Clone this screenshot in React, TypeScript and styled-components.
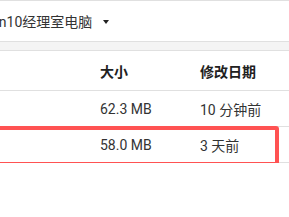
import styled, { createGlobalStyle } from "styled-components";

const GlobalStyle = createGlobalStyle`
  body {
    margin: 0;
    background: #fff;
    font-family: Roboto, "Noto Sans CJK SC", sans-serif;
    color: #212121;
    overflow: hidden;
  }
`;

const Page = styled.div`
  width: 289px;
  border-top: 1px solid #e0e0e0;
`;

const Toolbar = styled.div`
  height: 40px;
  display: flex;
  align-items: center;
  gap: 11px;
  font-size: 14px;
  color: #333;
  white-space: nowrap;
`;

const Crumb = styled.span`
  margin-left: -17px;
`;

const Caret = styled.span`
  width: 0;
  height: 0;
  border-left: 3.5px solid transparent;
  border-right: 3.5px solid transparent;
  border-top: 4px solid #222;
  margin-top: 1px;
`;

const Band = styled.div`
  height: 8px;
  background: #f4f4f4;
  border-top: 1px solid #e0e0e0;
  border-bottom: 1px solid #e0e0e0;
`;

const Row = styled.div<{ $head?: boolean }>`
  position: relative;
  display: grid;
  grid-template-columns: 100px 100px 1fr;
  align-items: center;
  height: ${(p) => (p.$head ? "39px" : "35px")};
  border-bottom: 1px solid #e0e0e0;
  font-size: 14px;
  font-weight: ${(p) => (p.$head ? 700 : 400)};
  color: ${(p) => (p.$head ? "#212121" : "#333")};
  white-space: nowrap;
`;

const Highlight = styled.div`
  position: absolute;
  top: -1px;
  left: -10px;
  right: 10px;
  height: 32px;
  border: 4px solid #ff5252;
  border-radius: 3px;
  pointer-events: none;
`;

const files = [
  { size: "62.3 MB", date: "10 分钟前", marked: false },
  { size: "58.0 MB", date: "3 天前", marked: true },
];

export default function App() {
  return (
    <Page>
      <GlobalStyle />
      <Toolbar>
        <Crumb>Win10经理室电脑</Crumb>
        <Caret />
      </Toolbar>
      <Band />
      <Row $head>
        <span />
        <span>大小</span>
        <span>修改日期</span>
      </Row>
      {files.map((f) => (
        <Row key={f.size}>
          <span />
          <span>{f.size}</span>
          <span>{f.date}</span>
          {f.marked && <Highlight />}
        </Row>
      ))}
    </Page>
  );
}
